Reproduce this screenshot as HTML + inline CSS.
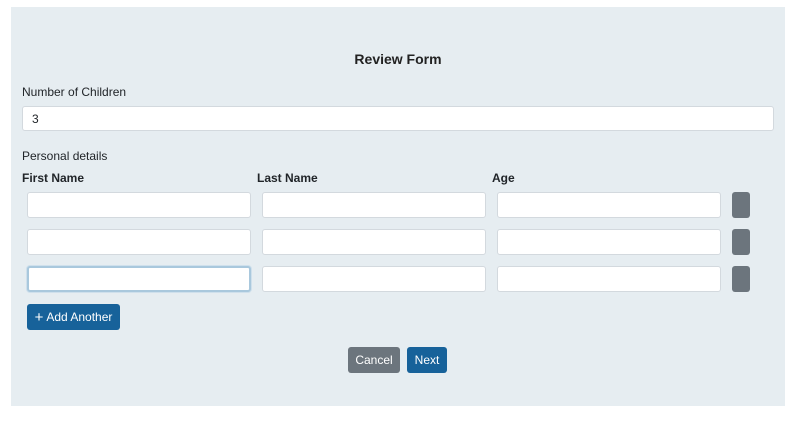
<!DOCTYPE html>
<html><head><style>
body{margin:0;width:800px;height:426px;background:#fff;font-family:"Liberation Sans",Arial,sans-serif;position:relative;overflow:hidden;color:#212529}
.p{position:absolute;left:11px;top:7px;width:774px;height:399px;background:#e6edf1}
.a{position:absolute}
.in{position:absolute;background:#fff;border:1px solid #d3d9de;border-radius:3px;box-sizing:border-box;height:26px;width:224px}
.g{position:absolute;background:#6c757d;border-radius:3px;width:18px;height:26px;left:732px}
.t{font-size:12px}
.b{font-size:12px;font-weight:bold}
.btn{position:absolute;color:#fff;font-size:12px;border-radius:3px;display:flex;align-items:center;justify-content:center;height:26px}
</style></head><body>
<div class="p"></div>
<div class="a" style="left:0;width:796px;top:51px;text-align:center;font-size:14px;font-weight:bold;color:#222">Review Form</div>
<div class="a t" style="left:22px;top:85px">Number of Children</div>
<div class="in" style="left:22px;top:106px;width:752px;height:25px;font-size:12px;padding:5px 0 0 9px">3</div>
<div class="a t" style="left:22px;top:149px">Personal details</div>
<div class="a b" style="left:22px;top:171px">First Name</div>
<div class="a b" style="left:257px;top:171px">Last Name</div>
<div class="a b" style="left:492px;top:171px">Age</div>
<div class="in" style="left:27px;top:192px"></div><div class="in" style="left:262px;top:192px"></div><div class="in" style="left:497px;top:192px"></div><div class="g" style="top:192px"></div>
<div class="in" style="left:27px;top:229px"></div><div class="in" style="left:262px;top:229px"></div><div class="in" style="left:497px;top:229px"></div><div class="g" style="top:229px"></div>
<div class="in" style="left:27px;top:266px;border:2px solid #a9c8dd;box-shadow:0 0 0 1px #cfe0ec"></div><div class="in" style="left:262px;top:266px"></div><div class="in" style="left:497px;top:266px"></div><div class="g" style="top:266px"></div>
<div class="btn" style="left:27px;top:304px;width:93px;background:#17629a"><span style="font-size:15px;margin-right:3px">+</span>Add Another</div>
<div class="btn" style="left:348px;top:347px;width:52px;background:#6c757d">Cancel</div>
<div class="btn" style="left:407px;top:347px;width:40px;background:#17629a">Next</div>
</body></html>
